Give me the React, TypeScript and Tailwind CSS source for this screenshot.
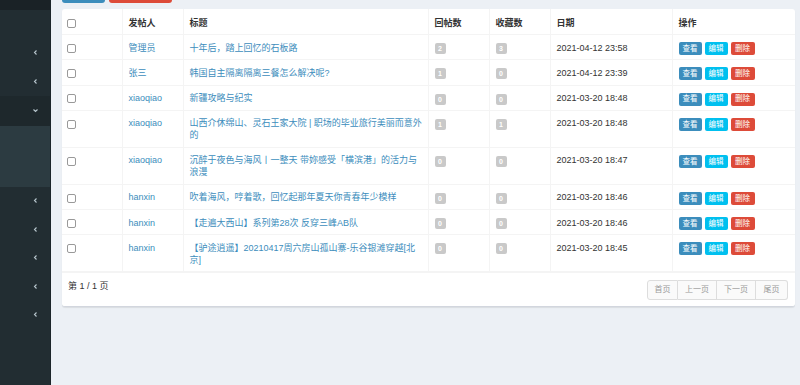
import React from 'react';

interface Post {
  author: string;
  title: string;
  replies: number;
  favs: number;
  date: string;
}

const posts: Post[] = [
  { author: '管理员', title: '十年后，踏上回忆的石板路', replies: 2, favs: 3, date: '2021-04-12 23:58' },
  { author: '张三', title: '韩国自主隔离隔离三餐怎么解决呢?', replies: 1, favs: 0, date: '2021-04-12 23:39' },
  { author: 'xiaoqiao', title: '新疆攻略与纪实', replies: 0, favs: 0, date: '2021-03-20 18:48' },
  { author: 'xiaoqiao', title: '山西介休绵山、灵石王家大院 | 职场的毕业旅行美丽而意外的', replies: 1, favs: 1, date: '2021-03-20 18:48' },
  { author: 'xiaoqiao', title: '沉醉于夜色与海风丨一整天 带妳感受「横滨港」的活力与浪漫', replies: 0, favs: 0, date: '2021-03-20 18:47' },
  { author: 'hanxin', title: '吹着海风，哼着歌，回忆起那年夏天你青春年少模样', replies: 0, favs: 0, date: '2021-03-20 18:46' },
  { author: 'hanxin', title: '【走遍大西山】系列第28次 反穿三峰AB队', replies: 0, favs: 0, date: '2021-03-20 18:46' },
  { author: 'hanxin', title: '【驴途逍遥】20210417周六房山孤山寨-乐谷银滩穿越[北京]', replies: 0, favs: 0, date: '2021-03-20 18:45' },
];

const Chevron = ({ down = false }: { down?: boolean }) => (
  <svg width="7" height="7" viewBox="0 0 7 7" className="text-[#b8c7ce]">
    <polyline
      points={down ? '1.5,2.5 3.5,4.5 5.5,2.5' : '4.5,1.5 2.5,3.5 4.5,5.5'}
      fill="none"
      stroke="currentColor"
      strokeWidth="1.1"
    />
  </svg>
);

const NavItem = ({ arrow, down = false, active = false }: { arrow: boolean; down?: boolean; active?: boolean }) => (
  <div className={`flex items-center justify-end pr-[11px] ${active ? 'bg-[#1e282c] h-[30px]' : 'h-[28.5px]'}`}>
    {arrow && <Chevron down={down} />}
  </div>
);

const Checkbox = () => (
  <span className="inline-block w-[9px] h-[9px] border border-[#999] rounded-[2px] bg-white align-middle" />
);

const Badge = ({ n }: { n: number }) => (
  <span className="inline-flex items-center justify-center w-[11px] h-[11px] rounded-[2px] bg-[#c9c9c9] text-white text-[7px] font-bold leading-none">
    {n}
  </span>
);

const ActBtn = ({ label, color }: { label: string; color: string }) => (
  <span className={`inline-flex items-center justify-center h-[13px] w-[23px] shrink-0 rounded-[2px] text-white text-[7.5px] leading-none ${color}`}>
    {label}
  </span>
);

export default function App() {
  const cell = 'border border-[#f4f4f4] px-[6px] pt-[7.6px] pb-[5px] align-top';
  const head = 'border border-[#f4f4f4] border-t-0 px-[6px] pt-[8.5px] pb-[4.8px] align-top';
  return (
    <div
      className="flex w-[800px] h-[385px] overflow-hidden bg-[#ecf0f5] text-[#333]"
      style={{ fontFamily: '"Liberation Sans", "Noto Sans CJK SC", sans-serif' }}
    >
      <aside className="w-[51px] shrink-0 bg-[#222d32] flex flex-col border-r border-[#1c2529]">
        <div className="h-[10px] bg-[#1a2226]" />
        <NavItem arrow={false} />
        <NavItem arrow />
        <NavItem arrow />
        <NavItem arrow down active />
        <div className="h-[61px] bg-[#2c3b41]" />
        <NavItem arrow />
        <NavItem arrow />
        <NavItem arrow />
        <NavItem arrow />
        <NavItem arrow />
      </aside>

      <main className="flex-1 pl-[11px] pr-[5px]">
        <div className="flex gap-[4px] h-[20px] mt-[-17px]">
          <span className="w-[43px] rounded-[3px] bg-[#3c8dbc]" />
          <span className="w-[63px] rounded-[3px] bg-[#dd4b39]" />
        </div>

        <div className="mt-[6px] bg-white rounded-[3px] border-b border-[#d2d6de] shadow-[0_1px_1px_rgba(0,0,0,0.08)]">
          <table className="w-[733px] table-fixed border-collapse text-[9px] leading-[11.7px]">
            <colgroup>
              <col className="w-[60px]" />
              <col className="w-[61px]" />
              <col className="w-[245px]" />
              <col className="w-[61px]" />
              <col className="w-[61px]" />
              <col className="w-[122px]" />
              <col className="w-[123px]" />
            </colgroup>
            <thead>
              <tr className="text-left font-bold">
                <th className={`${head} border-l-0 pl-[5px]`}><Checkbox /></th>
                <th className={head}>发帖人</th>
                <th className={head}>标题</th>
                <th className={head}>回帖数</th>
                <th className={head}>收藏数</th>
                <th className={head}>日期</th>
                <th className={`${head} border-r-0`}>操作</th>
              </tr>
            </thead>
            <tbody>
              {posts.map((p, i) => (
                <tr key={i}>
                  <td className={`${cell} border-l-0 pl-[5px]`}><Checkbox /></td>
                  <td className={`${cell} text-[#3c8dbc]`}>{p.author}</td>
                  <td className={`${cell} text-[#3c8dbc] pr-[3px]`}>{p.title}</td>
                  <td className={cell}><div className="h-[11.7px] flex items-center"><Badge n={p.replies} /></div></td>
                  <td className={cell}><div className="h-[11.7px] flex items-center"><Badge n={p.favs} /></div></td>
                  <td className={cell}>{p.date}</td>
                  <td className={`${cell} border-r-0`}>
                    <div className="flex items-center gap-[3px] h-[11.7px]">
                      <ActBtn label="查看" color="bg-[#3c8dbc]" />
                      <ActBtn label="编辑" color="bg-[#00c0ef]" />
                      <ActBtn label="删除" color="bg-[#dd4b39] w-[24px]" />
                    </div>
                  </td>
                </tr>
              ))}
            </tbody>
          </table>

          <div className="flex justify-between items-start pl-[6px] pr-[7px] pt-[7px] pb-[6px] border-t border-[#f4f4f4]">
            <span className="text-[9px] leading-[12px] mt-[0px]">第 1 / 1 页</span>
            <div className="flex h-[20px] text-[8px] text-[#999]">
              <span className="w-[31px] flex items-center justify-center border border-[#ddd] bg-[#fafafa] rounded-l-[3px]">首页</span>
              <span className="w-[39px] flex items-center justify-center border border-l-0 border-[#ddd] bg-[#fafafa]">上一页</span>
              <span className="w-[39px] flex items-center justify-center border border-l-0 border-[#ddd] bg-[#fafafa]">下一页</span>
              <span className="w-[32px] flex items-center justify-center border border-l-0 border-[#ddd] bg-[#fafafa] rounded-r-[3px]">尾页</span>
            </div>
          </div>
        </div>
      </main>
    </div>
  );
}
